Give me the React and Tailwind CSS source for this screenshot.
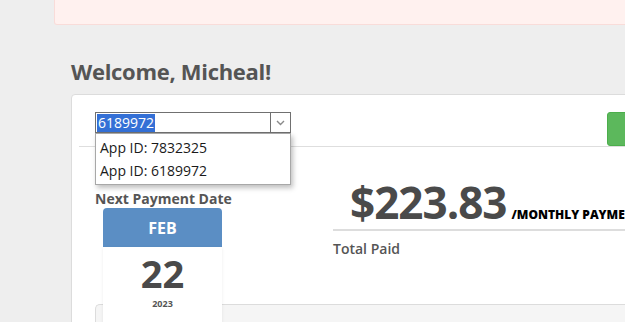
import { useState } from 'react'

export default function App() {
  const [appId] = useState('6189972')
  const options = ['7832325', '6189972']

  return (
    <div className="w-[625px] h-[322px] overflow-hidden bg-[#eeeeee] font-['Open_Sans',sans-serif]">
      {/* Alert */}
      <div className="ml-[54px] w-[640px] h-[25px] bg-[#fff1ef] border border-t-0 border-[#f9dcd9] rounded-bl-[3px]" />

      <h1 className="ml-[71px] mt-[33px] text-[22px] leading-[26px] font-bold text-[#555] tracking-[-0.3px]">
        Welcome, Micheal!
      </h1>

      {/* Card */}
      <div className="ml-[71px] mt-[10px] w-[640px] bg-white border border-[#dcdcdc] rounded-[4px]">
        <div className="relative flex items-start px-[23px] pt-[17px]">
          <div className="relative w-[196px] h-[21px] border border-[#707070] flex items-center bg-white">
            <span className="ml-[1px] px-[1px] bg-[#3470d6] text-white text-[14px] leading-[18px]">
              {appId}
            </span>
            <div className="ml-auto w-[20px] h-full border-l border-[#707070] flex items-center justify-center">
              <svg width="9" height="6" viewBox="0 0 9 6" fill="none">
                <path d="M1 1l3.5 3.5L8 1" stroke="#8a8a8a" strokeWidth="1.4" />
              </svg>
            </div>

            {/* open dropdown */}
            <div className="absolute left-[-1px] top-[20px] w-[196px] z-20 bg-white border border-[#a8a8a8] shadow-[2px_3px_5px_rgba(0,0,0,0.25)] py-[2px]">
              {options.map((o) => (
                <div key={o} className="h-[23px] pl-[4px] flex items-center text-[14px] text-[#1a1a1a]">
                  App ID: {o}
                </div>
              ))}
            </div>
          </div>
          <button className="ml-[316px] w-[70px] h-[34px] bg-[#5cb85c] rounded-[3px] border border-[#4cae4c]" />
        </div>

        <div className="mx-[7px] h-px bg-[#dedede]" />

        <div className="flex px-[23px] h-[157px] items-start">
          {/* Next payment */}
          <div className="w-[238px] pt-[42px]">
            <p className="text-[14px] leading-[19px] font-bold text-[#555] whitespace-nowrap">Next Payment Date</p>
            <div className="relative z-10 ml-[8px] w-[119px]">
              <div className="h-[39px] bg-[#5b8ec4] rounded-t-[4px] flex items-center justify-center text-white font-bold text-[16px]">
                FEB
              </div>
              <div className="h-[120px] bg-white shadow-[0_1px_3px_rgba(0,0,0,0.08)] flex flex-col items-center pt-[7px]">
                <span className="text-[38px] leading-[38px] font-bold text-[#4a4a4a]">22</span>
                <span className="mt-[6px] text-[9px] leading-[12px] font-bold text-[#555]">2023</span>
              </div>
            </div>
          </div>

          {/* Amount */}
          <div className="flex-1 pt-[33px]">
            <div className="flex items-baseline pl-[17px] whitespace-nowrap">
              <span className="text-[44px] leading-none font-bold text-[#4a4a4a] tracking-[-1px]">$223.83</span>
              <span className="ml-[5px] text-[12px] font-extrabold text-black">/MONTHLY PAYMENT</span>
            </div>
            <div className="h-[2px] bg-[#dddddd] mt-[5px]" />
            <p className="mt-[8px] text-[14px] leading-[19px] font-semibold text-[#555]">Total Paid</p>
          </div>
        </div>

        {/* Bottom panel */}
        <div className="ml-[23px] h-[40px] bg-[#f5f5f5] border border-r-0 border-[#dcdcdc] rounded-tl-[5px]" />
      </div>
    </div>
  )
}
